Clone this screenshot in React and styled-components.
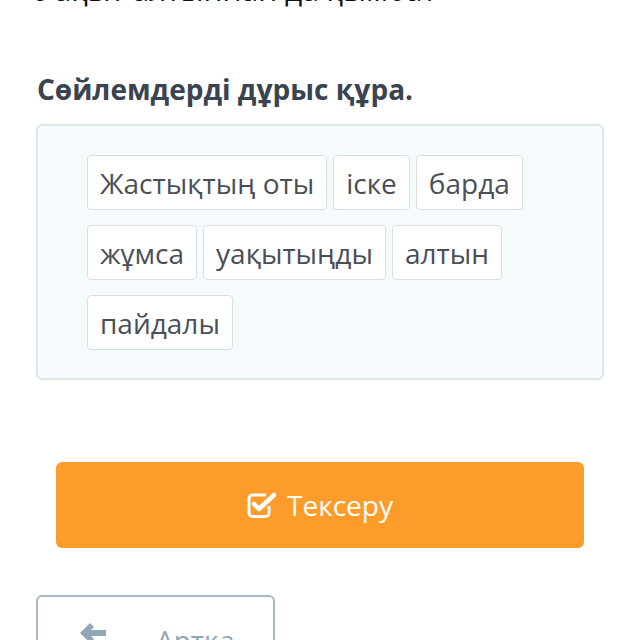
import React from 'react'
import styled, { createGlobalStyle } from 'styled-components'

const Global = createGlobalStyle`
  html, body {
    margin: 0;
    padding: 0;
    background: #ffffff;
    font-family: "Open Sans", "Noto Sans", sans-serif;
  }
`

const Page = styled.div`
  height: 640px;
  overflow: hidden;
  padding: 0 36px;
  box-sizing: border-box;
`

const Question = styled.div`
  margin-top: -30px;
  font-size: 30px;
  line-height: 40px;
  color: #111;
  white-space: nowrap;
`

const Title = styled.h2`
  margin: 59px 0 0 1px;
  font-size: 28px;
  line-height: 40px;
  font-weight: 700;
  color: #3a4350;
`

const Board = styled.div`
  margin-top: 15px;
  height: 256px;
  box-sizing: border-box;
  border: 2px solid #dde4ea;
  border-radius: 6px;
  background: #f5fafd;
  padding: 29px 49px;
`

const Words = styled.div`
  display: flex;
  flex-wrap: wrap;
  gap: 15px 6px;
  width: 440px;
`

const Word = styled.span`
  display: inline-flex;
  align-items: center;
  height: 55px;
  box-sizing: border-box;
  padding: 0 12px;
  background: #fff;
  border: 1px solid #dcdfe2;
  border-radius: 4px;
  font-size: 28px;
  color: #4a4f56;
`

const Check = styled.button`
  display: flex;
  align-items: center;
  justify-content: center;
  gap: 10px;
  width: 528px;
  height: 86px;
  margin: 82px 0 0 20px;
  border: none;
  border-radius: 6px;
  background: #fd9c2a;
  color: #fff;
  font-family: inherit;
  font-size: 28px;
`

const Back = styled.button`
  display: flex;
  align-items: flex-start;
  gap: 48px;
  width: 239px;
  height: 70px;
  margin-top: 47px;
  padding: 24px 0 0 40px;
  box-sizing: border-box;
  border: 2px solid #a9b7c3;
  border-radius: 6px;
  background: #fff;
  color: #93a6b5;
  font-family: inherit;
  font-size: 28px;
  line-height: 38px;
`

const words = ['Жастықтың оты', 'іске', 'барда', 'жұмса', 'уақытыңды', 'алтын', 'пайдалы']

function CheckIcon() {
  return (
    <svg width="30" height="28" viewBox="0 0 30 28" fill="none">
      <path d="M22 15v7a3.5 3.5 0 0 1-3.5 3.5H5.5A3.5 3.5 0 0 1 2 22V7.5A3.5 3.5 0 0 1 5.5 4H19" stroke="#fff" strokeWidth="3" />
      <path d="M7 13l5 5L27 4" stroke="#fff" strokeWidth="4.5" strokeLinejoin="round" strokeLinecap="round" />
    </svg>
  )
}

function ArrowIcon() {
  return (
    <svg width="30" height="26" viewBox="0 0 30 26">
      <path d="M12 2L2 12l10 10 4-4-3-3h15v-6H13l3-3z" fill="#93a6b5" />
    </svg>
  )
}

export default function App() {
  return (
    <Page>
      <Global />
      <Question>Уақыт алтыннан да қымбат</Question>
      <Title>Сөйлемдерді дұрыс құра.</Title>
      <Board>
        <Words>
          {words.map((w) => (
            <Word key={w}>{w}</Word>
          ))}
        </Words>
      </Board>
      <Check>
        <CheckIcon />
        Тексеру
      </Check>
      <Back>
        <ArrowIcon />
        Артқа
      </Back>
    </Page>
  )
}
